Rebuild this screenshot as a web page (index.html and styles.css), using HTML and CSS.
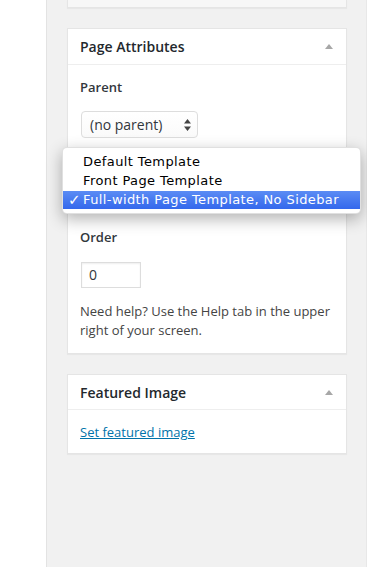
FILE: index.html
```html
<!DOCTYPE html>
<html>
<head>
<meta charset="utf-8">
<link rel="stylesheet" href="styles.css">
</head>
<body>
<div class="page">
  <aside class="side"></aside>
  <main class="main">
    <div class="postbox stub"></div>

    <div class="postbox attrs">
      <div class="hndle">
        <h3>Page Attributes</h3>
        <span class="toggle"></span>
      </div>
      <div class="inside">
        <p class="label">Parent</p>
        <div class="select parent">
          <span>(no parent)</span>
          <svg class="arrows" width="7" height="12" viewBox="0 0 7 12"><path d="M3.5 0 L7 4.5 L0 4.5 Z M0 7.5 L7 7.5 L3.5 12 Z" fill="#444"/></svg>
        </div>
        <div class="label spacer"></div>
        <div class="select template"></div>
        <p class="label">Order</p>
        <div class="input">0</div>
        <p class="help">Need help? Use the Help tab in the upper right of your screen.</p>

        <ul class="menu">
          <li class="item">Default Template</li>
          <li class="item">Front Page Template</li>
          <li class="item selected"><span class="check">✓</span>Full-width Page Template, No Sidebar</li>
        </ul>
      </div>
    </div>

    <div class="postbox featured">
      <div class="hndle">
        <h3>Featured Image</h3>
        <span class="toggle"></span>
      </div>
      <div class="inside">
        <a class="link" href="#">Set featured image</a>
      </div>
    </div>
  </main>
</div>
</body>
</html>
```

FILE: styles.css
```css
html, body {
  margin: 0;
  padding: 0;
  height: 567px;
  overflow: hidden;
  font-family: "Open Sans", "Noto Sans", sans-serif;
  color: #444;
}

.page {
  display: flex;
  height: 567px;
}

.side {
  width: 46px;
  flex: none;
  background: #fff;
  border-right: 1px solid #e3e3e3;
}

.main {
  flex: 1;
  background: #f1f1f1;
  padding-left: 20px;
  border-right: 1px solid #e8e8e8;
}

.postbox {
  width: 278px;
  background: #fff;
  border: 1px solid #e5e5e5;
  box-shadow: 0 1px 1px rgba(0, 0, 0, 0.04);
  position: relative;
}

.stub {
  height: 7px;
  border-top: none;
  background: #f7f7f7;
}

.attrs {
  margin-top: 20px;
}

.featured {
  margin-top: 20px;
}

.hndle {
  height: 35px;
  border-bottom: 1px solid #eee;
  display: flex;
  align-items: center;
  justify-content: space-between;
  padding: 0 13px 0 12px;
}

.featured .hndle {
  height: 34px;
}

.hndle h3 {
  margin: 0;
  font-size: 14px;
  font-weight: 600;
  color: #23282d;
  line-height: 19px;
}

.toggle {
  width: 0;
  height: 0;
  border-left: 4px solid transparent;
  border-right: 4px solid transparent;
  border-bottom: 5px solid #a7a7a7;
}

.inside {
  padding: 0 12px 13px;
  display: flex;
  flex-direction: column;
  align-items: flex-start;
  font-size: 13px;
  line-height: 19px;
}

.featured .inside {
  padding-bottom: 11px;
}

.label {
  margin: 15px 0 0;
  font-weight: 600;
  color: #32373c;
  font-size: 13px;
  line-height: 19px;
}

.label:first-child {
  margin-top: 13px;
}

.spacer {
  height: 19px;
}

.select {
  margin-top: 14px;
  height: 27px;
  box-sizing: border-box;
  border: 1px solid #ddd;
  border-radius: 4px;
  background: linear-gradient(#fff, #fafafa);
  display: flex;
  align-items: center;
  justify-content: space-between;
  font-size: 14px;
  color: #32373c;
}

.parent {
  width: 117px;
  padding: 0 6px 0 8px;
  margin-left: 1px;
}

.arrows {
  display: block;
}

.template {
  width: 250px;
  margin-left: 3px;
  border-bottom: 2px solid #2f5fb8;
}

.input {
  margin-top: 15px;
  margin-left: 1px;
  width: 60px;
  height: 26px;
  box-sizing: border-box;
  border: 1px solid #ddd;
  box-shadow: inset 0 1px 2px rgba(0, 0, 0, 0.07);
  padding: 0 7px;
  font-size: 14px;
  line-height: 24px;
  color: #32373c;
}

.help {
  margin: 14px 0 0;
  font-size: 13px;
  line-height: 19px;
  color: #444;
  width: 250px;
}

.menu {
  position: absolute;
  left: -6px;
  top: 118px;
  width: 299px;
  box-sizing: border-box;
  margin: 0;
  padding: 4px 0 4px;
  list-style: none;
  background: #fff;
  border: 1px solid rgba(0, 0, 0, 0.12);
  border-radius: 5px;
  box-shadow: 0 5px 16px rgba(0, 0, 0, 0.3);
  font-family: "DejaVu Sans", "Liberation Sans", sans-serif;
  font-size: 13px;
  letter-spacing: 0.4px;
  line-height: 19px;
  color: #000;
}

.item {
  padding-left: 20px;
  height: 19px;
  position: relative;
  white-space: nowrap;
}

.selected {
  background: linear-gradient(#5b8cf4, #3468ec);
  color: #fff;
  height: 18px;
  line-height: 18px;
  margin-top: 1px;
}

.check {
  position: absolute;
  left: 5px;
  top: 0;
  font-size: 15px;
  font-weight: bold;
}

.link {
  margin-top: 13px;
  color: #0073aa;
  text-decoration: underline;
  font-size: 13px;
  line-height: 19px;
}
```
